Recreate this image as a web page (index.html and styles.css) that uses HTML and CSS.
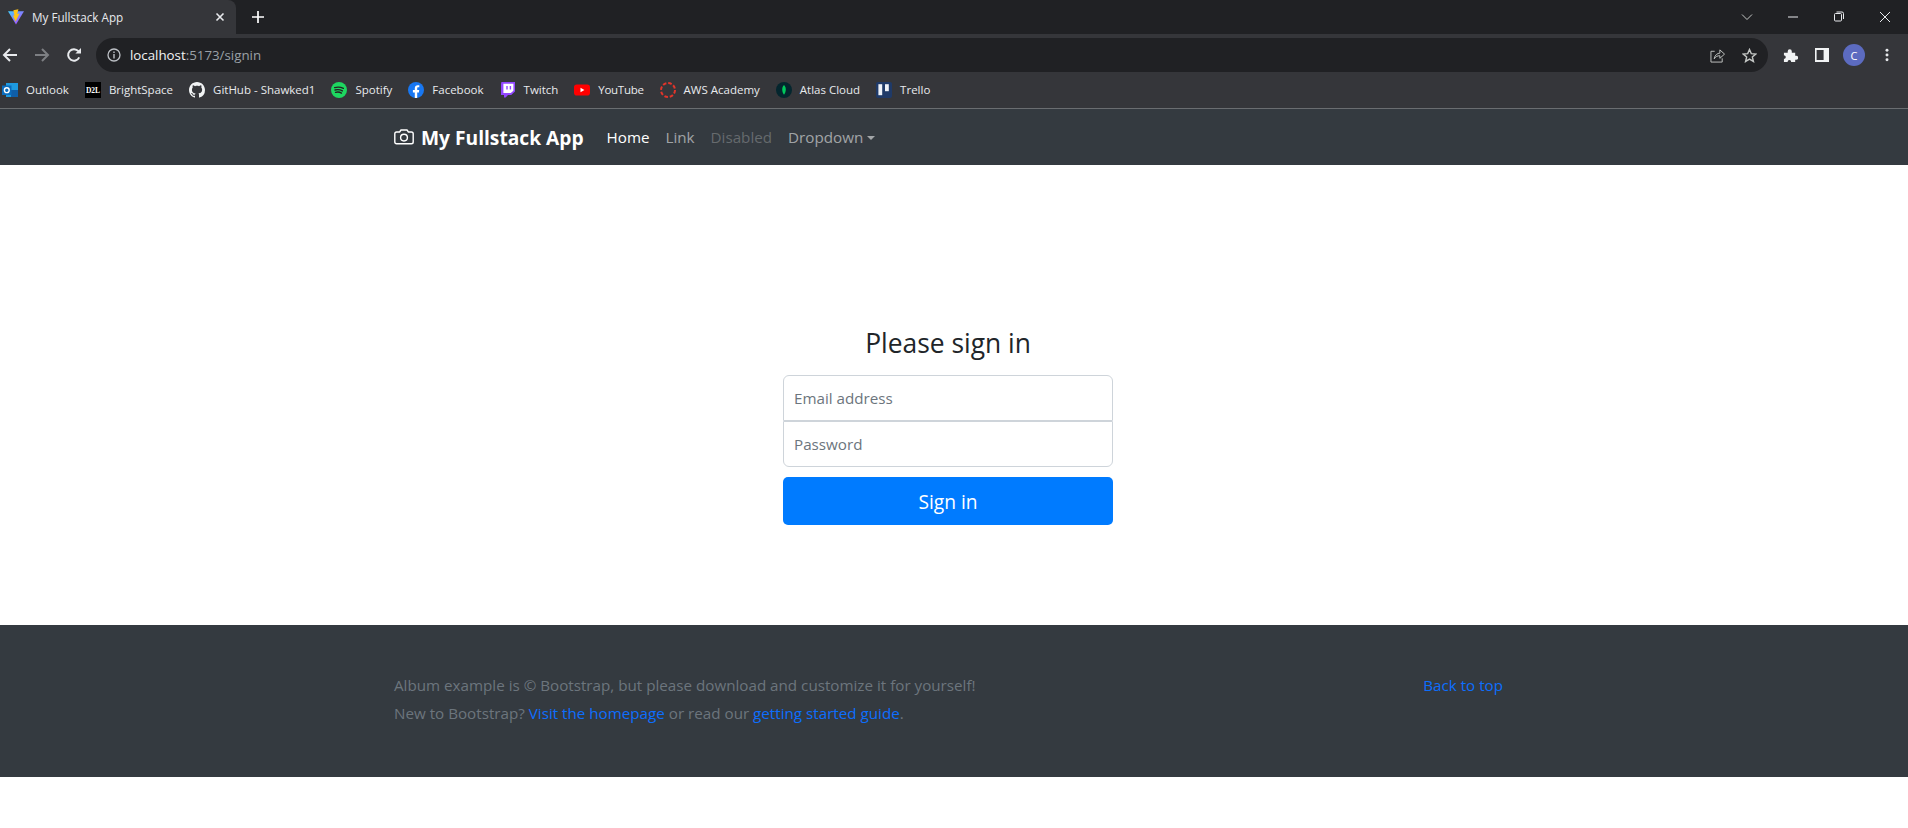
FILE: index.html
```html
<!DOCTYPE html>
<html lang="en">
<head>
  <meta charset="UTF-8">
  <title>My Fullstack App</title>
  <link rel="stylesheet" href="styles.css">
</head>
<body>
  <div class="tabstrip">
    <div class="tab">
      <svg class="favicon" viewBox="0 0 16 16">
        <defs>
          <linearGradient id="vitePurple" x1="0" y1="0" x2="1" y2="1">
            <stop offset="0" stop-color="#41d1ff"/>
            <stop offset="1" stop-color="#bd34fe"/>
          </linearGradient>
        </defs>
        <path d="M0 2.2 L16 2.2 L8 15.5 Z" fill="url(#vitePurple)"/>
        <path d="M10.4 0.3 L5.4 1.3 L6.4 6.4 L5 6.8 L7.6 12.6 L11.6 4.4 L9.2 4.9 Z" fill="#ffc517"/>
      </svg>
      <span class="tab-title">My Fullstack App</span>
      <svg class="tab-close" viewBox="0 0 10 10"><path d="M1.5 1.5 L8.5 8.5 M8.5 1.5 L1.5 8.5" stroke="#e8eaed" stroke-width="1.6"/></svg>
    </div>
    <svg class="new-tab" viewBox="0 0 12 12"><path d="M6 0 V12 M0 6 H12" stroke="#fff" stroke-width="1.7"/></svg>
    <div class="window-controls">
      <svg class="win-icon chevron" viewBox="0 0 12 12"><path d="M1 3.5 L6 8.5 L11 3.5" fill="none" stroke="#c4c7c5" stroke-width="1"/></svg>
      <svg class="win-icon minimize" viewBox="0 0 12 12"><path d="M1 6 H11" stroke="#e8eaed" stroke-width="1"/></svg>
      <svg class="win-icon restore" viewBox="0 0 12 12"><path d="M1.5 3.5 Q1.5 2.5 2.5 2.5 H7.5 Q8.5 2.5 8.5 3.5 V9 Q8.5 10 7.5 10 H2.5 Q1.5 10 1.5 9 Z M3.5 1 H9 Q10.5 1 10.5 2.5 V8" fill="none" stroke="#e8eaed" stroke-width="1"/></svg>
      <svg class="win-icon close" viewBox="0 0 12 12"><path d="M1 1 L11 11 M11 1 L1 11" stroke="#e8eaed" stroke-width="1"/></svg>
    </div>
  </div>

  <div class="toolbar">
    <svg class="tool-icon" viewBox="0 0 16 16"><path d="M15 8 H2 M8 2 L2 8 L8 14" fill="none" stroke="#e8eaed" stroke-width="2"/></svg>
    <svg class="tool-icon" viewBox="0 0 16 16"><path d="M1 8 H14 M8 2 L14 8 L8 14" fill="none" stroke="#7d7f83" stroke-width="2"/></svg>
    <svg class="tool-icon" viewBox="0 0 16 16"><path d="M13.2 10.4 A5.8 5.8 0 1 1 12.4 4.2" fill="none" stroke="#e8eaed" stroke-width="2"/><path d="M9.4 6.6 H15 V1 Z" fill="#e8eaed"/></svg>
    <div class="omnibox">
      <svg class="info-icon" viewBox="0 0 14 14"><circle cx="7" cy="7" r="6" fill="none" stroke="#bdc1c6" stroke-width="1.3"/><path d="M7 6 V10.4 M7 3.4 V5" stroke="#bdc1c6" stroke-width="1.4"/></svg>
      <span class="url"><span class="url-host">localhost</span>:5173/signin</span>
      <svg class="share-icon" viewBox="0 0 16 16"><path d="M5 3.5 H1 V15 H13 V11" fill="none" stroke="#c4c7c5" stroke-width="1"/><path d="M4.5 11.5 C5 7.5 8 5.5 10.5 5.5 V2 L15.5 6.5 L10.5 11 V8.2 C8 8.2 6 9.2 4.5 11.5 Z" fill="none" stroke="#c4c7c5" stroke-width="1"/></svg>
      <svg class="star-icon" viewBox="0 0 16 16"><path d="M8 1.6 L9.9 6 L14.7 6.4 L11 9.6 L12.2 14.3 L8 11.8 L3.8 14.3 L5 9.6 L1.3 6.4 L6.1 6 Z" fill="none" stroke="#c4c7c5" stroke-width="1.5"/></svg>
    </div>
    <svg class="ext-icon" viewBox="0 0 16 16"><path d="M1 5 H5 V3.6 A2.2 2.2 0 0 1 9.4 3.6 V5 H13 V8.2 H14 A2.2 2.2 0 0 1 14 12.6 H13 V15 H8.6 V14 A2 2 0 0 0 5 14 V15 H1 V11.4 H2 A2 2 0 0 0 2 8 H1 Z" fill="#f1f3f4"/></svg>
    <svg class="panel-icon" viewBox="0 0 14 14"><path d="M0 0 H14 V14 H0 Z M1.6 2 V12 H8.6 V2 Z" fill="#f1f3f4" fill-rule="evenodd"/></svg>
    <div class="avatar">C</div>
    <svg class="menu-icon" viewBox="0 0 4 16"><circle cx="2" cy="2.5" r="1.7" fill="#e8eaed"/><circle cx="2" cy="8" r="1.7" fill="#e8eaed"/><circle cx="2" cy="13.5" r="1.7" fill="#e8eaed"/></svg>
  </div>

  <div class="bookmarks">
    <a class="bookmark">
      <svg viewBox="0 0 16 16"><rect x="4" y="1" width="12" height="14" fill="#1e9ae0"/><rect x="9" y="8" width="7" height="7" fill="#0f5ea8"/><rect x="0" y="3.5" width="9.5" height="9.5" fill="#0a6cbd"/><circle cx="4.8" cy="8.2" r="2.4" fill="none" stroke="#fff" stroke-width="1.4"/></svg>
      <span>Outlook</span>
    </a>
    <a class="bookmark">
      <svg viewBox="0 0 16 16"><rect width="16" height="16" fill="#000"/><text x="8" y="10.6" class="d2l">D2L</text></svg>
      <span>BrightSpace</span>
    </a>
    <a class="bookmark">
      <svg viewBox="0 0 16 16"><path fill="#f1f3f4" fill-rule="evenodd" d="M8 0C3.58 0 0 3.58 0 8c0 3.54 2.29 6.53 5.47 7.59.4.07.55-.17.55-.38 0-.19-.01-.82-.01-1.49-2.01.37-2.53-.49-2.69-.94-.09-.23-.48-.94-.82-1.13-.28-.15-.68-.52-.01-.53.63-.01 1.08.58 1.23.82.72 1.21 1.87.87 2.33.66.07-.52.28-.87.51-1.07-1.78-.2-3.64-.89-3.64-3.95 0-.87.31-1.59.82-2.15-.08-.2-.36-1.02.08-2.12 0 0 .67-.21 2.2.82.64-.18 1.32-.27 2-.27s1.36.09 2 .27c1.53-1.04 2.2-.82 2.2-.82.44 1.1.16 1.92.08 2.12.51.56.82 1.27.82 2.15 0 3.07-1.87 3.75-3.65 3.95.29.25.54.73.54 1.48 0 1.07-.01 1.93-.01 2.2 0 .21.15.46.55.38A8 8 0 0 0 16 8c0-4.42-3.58-8-8-8z"/></svg>
      <span>GitHub - Shawked1</span>
    </a>
    <a class="bookmark">
      <svg viewBox="0 0 16 16"><circle cx="8" cy="8" r="8" fill="#1ed760"/><path d="M3.6 5.6 C6.4 4.8 9.8 5 12.4 6.4 M4 8 C6.4 7.4 9.2 7.6 11.4 8.9 M4.5 10.3 C6.5 9.8 8.8 10 10.5 11.1" fill="none" stroke="#222" stroke-width="1.3" stroke-linecap="round"/></svg>
      <span>Spotify</span>
    </a>
    <a class="bookmark">
      <svg viewBox="0 0 16 16"><circle cx="8" cy="8" r="8" fill="#1877f2"/><path d="M6.8 16 V10.4 H4.9 V8 H6.8 V6.3 C6.8 4.3 8 3.2 9.8 3.2 C10.6 3.2 11.3 3.3 11.3 3.3 V5.3 H10.3 C9.4 5.3 9.2 5.8 9.2 6.4 V8 H11.2 L10.9 10.4 H9.2 V16 Z" fill="#fff"/></svg>
      <span>Facebook</span>
    </a>
    <a class="bookmark">
      <svg viewBox="0 0 16 16"><path d="M1.4 0 H15 V9.6 L11.2 13 H8 L5.6 15.6 H4 V13 H1 V2 Z" fill="#9146ff"/><path d="M3.4 1.8 H13.4 V8.8 L10.8 11 H3.4 Z" fill="#fff"/><path d="M7 4 V7.6 M10.4 4 V7.6" stroke="#9146ff" stroke-width="1.4"/></svg>
      <span>Twitch</span>
    </a>
    <a class="bookmark">
      <svg viewBox="0 0 16 16"><rect x="0" y="2.4" width="16" height="11.2" rx="2.8" fill="#f00"/><path d="M6.5 5.8 L10.4 8 L6.5 10.2 Z" fill="#fff"/></svg>
      <span class="tight">YouTube</span>
    </a>
    <a class="bookmark">
      <svg viewBox="0 0 16 16"><circle cx="8" cy="8" r="7" fill="none" stroke="#e0352b" stroke-width="2" stroke-dasharray="3.6 1.9"/></svg>
      <span>AWS Academy</span>
    </a>
    <a class="bookmark">
      <svg viewBox="0 0 16 16"><circle cx="8" cy="8" r="8" fill="#04262e"/><path d="M8 3 C10.4 5.4 10.4 9.4 8 12.8 C5.6 9.4 5.6 5.4 8 3 Z" fill="#00c95c"/></svg>
      <span>Atlas Cloud</span>
    </a>
    <a class="bookmark">
      <svg viewBox="0 0 16 16"><rect width="16" height="16" rx="2" fill="#1f3a68"/><rect x="2.4" y="2.2" width="3.8" height="11" fill="#eef2f8"/><rect x="9" y="2.2" width="3.8" height="7" fill="#eef2f8"/></svg>
      <span>Trello</span>
    </a>
  </div>

  <nav class="navbar">
    <div class="page-width nav-inner">
      <a class="brand">
        <svg class="camera" viewBox="0 0 20 20"><path d="M2.6 5 H5.6 L7 3 H13 L14.4 5 H17.4 Q19.2 5 19.2 6.8 V15 Q19.2 16.8 17.4 16.8 H2.6 Q0.8 16.8 0.8 15 V6.8 Q0.8 5 2.6 5 Z" fill="none" stroke="#fff" stroke-width="1.4"/><circle cx="10" cy="10.6" r="3.4" fill="none" stroke="#fff" stroke-width="1.4"/></svg>
        <span>My Fullstack App</span>
      </a>
      <a class="nav-link active">Home</a>
      <a class="nav-link">Link</a>
      <a class="nav-link disabled">Disabled</a>
      <a class="nav-link dropdown">Dropdown</a>
    </div>
  </nav>

  <main class="signin">
    <form class="signin-form">
      <h1>Please sign in</h1>
      <input class="field field-top" type="email" placeholder="Email address">
      <input class="field field-bottom" type="password" placeholder="Password">
      <button class="signin-button" type="button">Sign in</button>
    </form>
  </main>

  <footer class="footer">
    <div class="page-width">
      <div class="footer-row">
        <p>Album example is © Bootstrap, but please download and customize it for yourself!</p>
        <a class="footer-link">Back to top</a>
      </div>
      <p>New to Bootstrap? <a class="footer-link">Visit the homepage</a> or read our <a class="footer-link">getting started guide</a>.</p>
    </div>
  </footer>
</body>
</html>
```

FILE: styles.css
```css
* {
  box-sizing: border-box;
}
body {
  margin: 0;
  font-family: "Open Sans", "Noto Sans", sans-serif;
  background: #fff;
}
a {
  text-decoration: none;
}
p {
  margin: 0;
}

/* browser chrome */
.tabstrip {
  height: 34px;
  background: #202124;
  display: flex;
  align-items: center;
}
.tab {
  width: 236px;
  height: 34px;
  background: #35363a;
  border-radius: 0 8px 0 0;
  display: flex;
  align-items: center;
  padding: 0 11px 0 8px;
}
.favicon {
  width: 16px;
  height: 16px;
}
.tab-title {
  margin-left: 8px;
  flex: 1;
  font-size: 11.7px;
  color: #e8eaed;
}
.tab-close {
  width: 10px;
  height: 10px;
}
.new-tab {
  width: 12px;
  height: 12px;
  margin-left: 16px;
}
.window-controls {
  margin-left: auto;
  display: flex;
  align-items: center;
  padding-right: 17px;
  gap: 34px;
}
.win-icon {
  width: 12px;
  height: 12px;
}
.toolbar {
  height: 38px;
  padding-top: 4px;
  background: #35363a;
  display: flex;
  align-items: center;
}
.tool-icon {
  width: 16px;
  height: 16px;
  margin-left: 2px;
  margin-right: 14px;
}
.omnibox {
  width: 1672px;
  height: 34px;
  border-radius: 17px;
  background: #202124;
  display: flex;
  align-items: center;
  padding: 0 11px;
}
.info-icon {
  width: 14px;
  height: 14px;
}
.url {
  margin-left: 9px;
  flex: 1;
  font-size: 13.3px;
  color: #9aa0a6;
}
.url-host {
  color: #f1f3f4;
  font-weight: 500;
}
.share-icon {
  width: 15px;
  height: 15px;
  margin-right: 17px;
}
.star-icon {
  width: 15px;
  height: 15px;
}
.ext-icon {
  width: 15px;
  height: 15px;
  margin-left: 15px;
}
.panel-icon {
  width: 14px;
  height: 14px;
  margin-left: 17px;
}
.avatar {
  width: 22px;
  height: 22px;
  margin-left: 14px;
  border-radius: 50%;
  background: #5c6bc0;
  color: #fff;
  font-size: 11px;
  display: flex;
  align-items: center;
  justify-content: center;
}
.menu-icon {
  width: 4px;
  height: 14px;
  margin-left: 20px;
}
.bookmarks {
  height: 37px;
  background: #35363a;
  border-bottom: 1px solid #6a6d70;
  display: flex;
  align-items: center;
  padding-left: 2px;
  gap: 16px;
}
.bookmark {
  display: flex;
  align-items: center;
  gap: 8px;
  font-size: 11.5px;
  color: #e8eaed;
}
.bookmark span {
  padding-bottom: 2px;
}
.bookmark .tight {
  letter-spacing: -0.3px;
}
.bookmark svg {
  width: 16px;
  height: 16px;
}
.d2l {
  font-family: "Liberation Serif", serif;
  font-size: 7.5px;
  font-weight: 700;
  fill: #fff;
  text-anchor: middle;
}

/* page */
.page-width {
  width: 1109px;
  margin-left: 394px;
}
.navbar {
  height: 56px;
  background: #343a40;
}
.nav-inner {
  height: 56px;
  display: flex;
  align-items: center;
}
.brand {
  display: flex;
  align-items: center;
  gap: 7px;
  font-size: 19.2px;
  font-weight: 700;
  color: #fff;
  margin-right: 15px;
}
.camera {
  width: 20px;
  height: 20px;
}
.nav-link {
  padding: 0 8px;
  font-size: 15.2px;
  color: rgba(255, 255, 255, 0.55);
}
.nav-link.active {
  color: #fff;
}
.nav-link.disabled {
  color: rgba(255, 255, 255, 0.25);
}
.dropdown::after {
  content: "";
  display: inline-block;
  margin-left: 4px;
  vertical-align: 3px;
  border-top: 4px solid;
  border-left: 4px solid transparent;
  border-right: 4px solid transparent;
}
.signin {
  height: 460px;
  padding-top: 160px;
}
.signin-form {
  width: 330px;
  margin-left: 783px;
  display: flex;
  flex-direction: column;
}
.signin-form h1 {
  margin: 0 0 13px;
  height: 37px;
  line-height: 37px;
  font-size: 26.4px;
  font-weight: 400;
  color: #212529;
  text-align: center;
}
.field {
  height: 46px;
  padding: 0 10px;
  border: 1px solid #ced4da;
  font-family: inherit;
  font-size: 15.2px;
  background: #fff;
}
.field::placeholder {
  color: #6c757d;
  opacity: 1;
}
.field-top {
  border-radius: 6px 6px 0 0;
}
.field-bottom {
  border-radius: 0 0 6px 6px;
}
.signin-button {
  height: 48px;
  margin-top: 10px;
  border: none;
  border-radius: 5px;
  background: #007bff;
  color: #fff;
  font-family: inherit;
  font-size: 19.2px;
}
.footer {
  height: 152px;
  padding-top: 46px;
  background: #343a40;
  font-size: 15.2px;
  line-height: 28px;
  color: #6c757d;
}
.footer-row {
  display: flex;
  justify-content: space-between;
}
.footer-link {
  color: #0d6efd;
}
```
